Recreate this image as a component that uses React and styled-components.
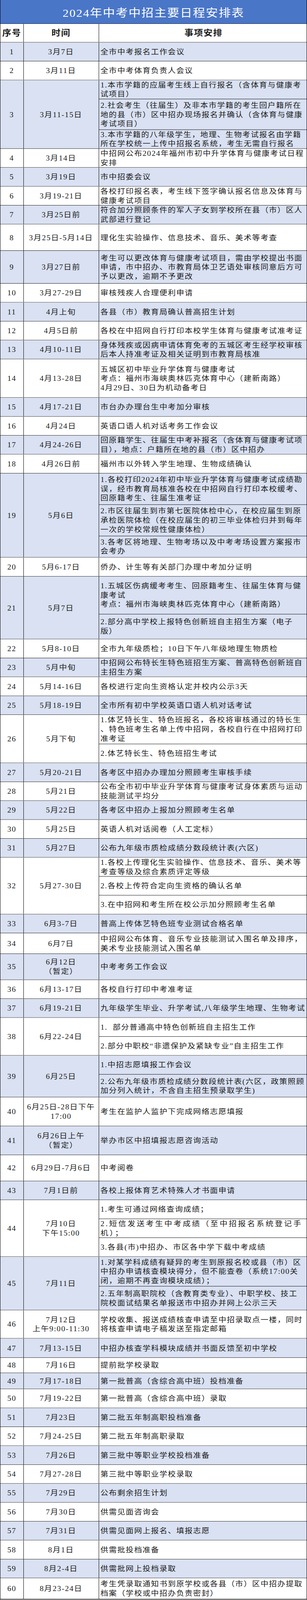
import { useState } from "react";
import styled, { createGlobalStyle } from "styled-components";

const GlobalStyle = createGlobalStyle`
  * {
    box-sizing: border-box;
  }
  html, body {
    margin: 0;
    background: #fff;
    overflow: hidden;
  }
  body {
    font-family: "Liberation Serif", "Noto Sans CJK SC", serif;
    color: #1b1b1b;
  }
`;

// full height of the sheet as designed
const SHEET_HEIGHT = 4485;

const Frame = styled.div`
  width: 787px;
  overflow: hidden;
`;

const Page = styled.div`
  width: 787px;
  transform-origin: top left;
  border-left: 1.5px solid #000;
  border-right: 1.5px solid #000;
  border-bottom: 1px solid #000;
`;

const TitleBar = styled.div`
  height: 67px;
  display: flex;
  align-items: center;
  justify-content: center;
  background: #4a76c8;
  border-bottom: 1px solid #000;
  color: #fff;
  font-size: 31px;
  letter-spacing: 2px;
  white-space: nowrap;
`;

const Row = styled.div`
  display: grid;
  grid-template-columns: 59.5px 193px minmax(0, 1fr);
  height: ${({ $h }) => $h}px;
  overflow: hidden;
  border-bottom: 1px solid #000;
  background: ${({ $alt }) => ($alt ? "#d9e1f2" : "#fff")};
  font-size: ${({ $head }) => ($head ? "23px" : "20px")};
  font-weight: ${({ $head }) => ($head ? 700 : 400)};
  letter-spacing: ${({ $head }) => ($head ? "1.5px" : "1.6px")};
  line-height: 26px;
`;

const Cell = styled.div`
  display: flex;
  align-items: center;
  justify-content: center;
  min-width: 0;
  text-align: center;
  white-space: pre-line;
  border-right: 1.5px solid #000;
`;

const Items = styled.div`
  display: flex;
  flex-direction: column;
  min-width: 0;
  min-height: 0;
  align-items: ${({ $center }) => ($center ? "center" : "stretch")};
`;

const Item = styled.div`
  flex: ${({ $h }) => $h} 1 0;
  min-height: 0;
  display: flex;
  align-items: center;
  padding-left: 4px;
  white-space: pre;
  letter-spacing: ${({ $spread }) => ($spread ? "3.6px" : "inherit")};
  & + & {
    border-top: 1px solid #000;
  }
`;

// [时间, 行高, 事项] or [时间, [[高, 事项], ...]]
const rows = [
  ["3月7日", 53, "全市中考报名工作会议"],
  ["3月11日", 53, "全市中考体育负责人会议"],
  [
    "3月11-15日",
    [
      [53, "1.本市学籍的应届考生线上自行报名（含体育与健康考\n试项目）"],
      [86, "2.社会考生（往届生）及非本市学籍的考生回户籍所在\n地的县（市）区中招办现场报名并确认（含体育与健康\n考试项目）"],
      [53, "3.本市学籍的八年级学生，地理、生物考试报名由学籍\n所在学校统一上传中招报名系统，考生无需自行报名"],
    ],
  ],
  ["3月14日", 53, "中招网公布2024年福州市初中升学体育与健康考试日程\n安排"],
  ["3月19日", 53, "市中招委会议"],
  ["3月19-21日", 53, "各校打印报名表，考生线下签字确认报名信息及体育与\n健康考试项目"],
  ["3月25日前", 53, "符合加分照顾条件的军人子女到学校所在县（市）区人\n武部进行登记"],
  ["3月25日-5月14日", 74, "理化生实验操作、信息技术、音乐、美术等考查"],
  ["3月27日前", 92, "考生可以更改体育与健康考试项目，需由学校提出书面\n申请，市中招办、市教育局体卫艺语处审核同意后方可\n予以更改，逾期不予更改"],
  ["3月27-29日", 53, "审核残疾人合理便利申请"],
  ["4月上旬", 53, "各县（市）教育局确认普高招生计划"],
  ["4月5日前", 53, "各校在中招网自行打印本校学生体育与健康考试准考证"],
  ["4月10-11日", 53, "身体残疾或因病申请体育免考的五城区考生经学校审核\n后本人持准考证及相关证明到市教育局核准"],
  ["4月13-28日", 108, "五城区初中毕业升学体育与健康考试\n考点：福州市海峡奥林匹克体育中心（建新南路）\n4月29日、30日为机动备考日"],
  ["4月17-21日", 53, "市台办办理台生中考加分审核"],
  ["4月24日", 53, "英语口语人机对话考务工作会议"],
  ["4月24-26日", 53, "回原籍学生、往届生中考补报名（含体育与健康考试项\n目），地点：户籍所在地的县（市）区中招办"],
  ["4月26日前", 53, "福州市以外转入学生地理、生物成绩确认"],
  [
    "5月6日",
    [
      [88, "1.各校打印2024年初中毕业升学体育与健康考试成绩勘\n误，经市教育局核准各校在中招网自行打印本校缓考、\n回原籍考生、往届生准考证"],
      [88, "2.市区往届生到市第七医院体检中心，在校应届生到原\n承检医院体检（在校应届生的初三毕业体检归并到每年\n一次的学校常规性健康体检）"],
      [60, "3.各考区将地理、生物考场以及中考考场设置方案报市\n会考办"],
    ],
  ],
  ["5月6-17日", 53, "侨办、计生等有关部门办理中考加分证明"],
  [
    "5月7日",
    [
      [106, "1.五城区伤病缓考考生、回原籍考生、往届生体育与健\n康考试\n考点：福州市海峡奥林匹克体育中心（建新南路）"],
      [70, "2.部分高中学校上报特色创新班自主招生方案（电子\n版）"],
    ],
  ],
  ["5月8-10日", 53, "全市九年级质检；10日下午八年级地理生物质检"],
  ["5月中旬", 53, "中招网公布特长生特色班招生方案、普高特色创新班自\n主招生方案"],
  ["5月14-16日", 53, "各校进行定向生资格认定并校内公示3天"],
  ["5月18-19日", 53, "全市所有初中学校英语口语人机对话考试"],
  [
    "5月下旬",
    [
      [82, "1.体艺特长生、特色班报名，各校将审核通过的特长生\n、特色班考生名单上传中招网，各校自行在中招网打印\n准考证"],
      [53, "2.体艺特长生、特色班招生考试"],
    ],
  ],
  ["5月20-21日", 53, "各考区中招办办理加分照顾考生审核手续"],
  ["5月21日", 53, "公布全市初中毕业升学体育与健康考试身体素质与运动\n技能测试平均分"],
  ["5月22日", 53, "各考区中招办上报加分照顾考生名单"],
  ["5月25日", 53, "英语人机对话阅卷（人工定标）"],
  ["5月27日", 53, "公布九年级市质检成绩分数段统计表(六区)"],
  [
    "5月27-30日",
    [
      [53, "1.各校上传理化生实验操作、信息技术、音乐、美术等\n考查等级及综合素质评定等级"],
      [53, "2.各校上传符合定向生资格的确认名单"],
      [53, "3.在中招网和考生所在校公示加分照顾考生名单"],
    ],
  ],
  ["6月3-7日", 53, "普高上传体艺特色班专业测试合格名单"],
  ["6月7日", 58, "中招网公布体育、音乐专业技能测试入围名单及排序，\n美术专业技能测试入围名单"],
  ["6月12日\n（暂定）", 73, "中考考务工作会议"],
  ["6月13-17日", 53, "各校自行打印中考准考证"],
  ["6月19-21日", 53, "九年级学生毕业、升学考试,八年级学生地理、生物考试"],
  [
    "6月22-24日",
    [
      [53, "1.  部分普通高中特色创新班自主招生工作"],
      [53, "2.部分中职校“非遗保护及紧缺专业”自主招生工作"],
    ],
  ],
  [
    "6月25日",
    [
      [53, "1.中招志愿填报工作会议"],
      [64, "2.公布九年级市质检成绩分数段统计表(六区，政策照顾\n加分列入统计，不含自主招生预录取学生)"],
    ],
  ],
  ["6月25日-28日下午\n17:00", 81, "考生在监护人监护下完成网络志愿填报"],
  ["6月26日上午\n（暂定）", 81, "举办市区中招填报志愿咨询活动"],
  ["6月29日-7月6日", 73, "中考阅卷"],
  ["7月1日前", 53, "各校上报体育艺术特殊人才书面申请"],
  [
    "7月10日\n下午15:00",
    [
      [53, "1.考生可通过网络查询成绩；"],
      [53, "2.短信发送考生中考成绩（至中招报名系统登记手\n机）；", true],
      [53, "3.各县(市)中招办、市区各中学下载中考成绩"],
    ],
  ],
  [
    "7月11日",
    [
      [83, "1.对某学科成绩有疑异的考生到原报名校或县（市）区\n中招办申请核查模块得分，但不能查卷（系统17:00关\n闭，逾期不再查询模块成绩）；"],
      [67, "2.五年制高职院校（含教育类专业）、中职学校、技工\n院校面试结果名单报送市中招办并网上公示三天"],
    ],
  ],
  ["7月12日\n上午9:00-11:30", 79, "学校收集、报送成绩核查申请至中招录取点一楼，同时\n将核查申请电子稿发送至指定邮箱"],
  ["7月13-15日", 54, "中招办核查学科模块成绩并书面反馈至初中学校"],
  ["7月16日", 43, "提前批学校录取"],
  ["7月17-18日", 45, "第一批普高（含综合高中班）投档准备"],
  ["7月19-22日", 53, "第一批普高（含综合高中班）录取"],
  ["7月23日", 53, "第二批五年制高职投档准备"],
  ["7月24-25日", 53, "第二批五年制高职录取"],
  ["7月26日", 53, "第三批中等职业学校投档准备"],
  ["7月27-28日", 53, "第三批中等职业学校录取"],
  ["7月29日", 53, "公布剩余招生计划"],
  ["7月30日", 53, "供需见面咨询会"],
  ["7月31日", 53, "供需见面网上报名、填报志愿"],
  ["8月1日", 53, "供需批投档准备"],
  ["8月2-4日", 53, "供需批网上投档录取"],
  ["8月23-24日", 59, "考生凭录取通知书到原学校或各县（市）区中招办提取\n档案（学校或中招办负责密封）"],
];

function ScheduleRow({ index, row }) {
  const [date, second, third] = row;
  const items = Array.isArray(second) ? second : [[second, third]];
  const height = items.reduce((sum, [h]) => sum + h, 0);

  return (
    <Row $h={height} $alt={index % 2 === 0}>
      <Cell>{index + 1}</Cell>
      <Cell>{date}</Cell>
      <Items>
        {items.map(([h, text, spread], i) => (
          <Item key={i} $h={h} $spread={spread}>
            {text}
          </Item>
        ))}
      </Items>
    </Row>
  );
}

export default function App() {
  // the window can be shorter than the sheet; squeeze it so the whole table shows
  const [fit] = useState(() => Math.min(1, window.innerHeight / SHEET_HEIGHT));

  return (
    <>
      <GlobalStyle />
      <Frame style={{ height: Math.floor(SHEET_HEIGHT * fit) }}>
        <Page style={fit < 1 ? { transform: `scaleY(${fit})` } : undefined}>
          <TitleBar>2024年中考中招主要日程安排表</TitleBar>
          <Row $h={52} $head>
            <Cell>序号</Cell>
            <Cell>时间</Cell>
            <Items $center>
              <Item $h={1}>事项安排</Item>
            </Items>
          </Row>
          {rows.map((row, i) => (
            <ScheduleRow key={i} index={i} row={row} />
          ))}
        </Page>
      </Frame>
    </>
  );
}
